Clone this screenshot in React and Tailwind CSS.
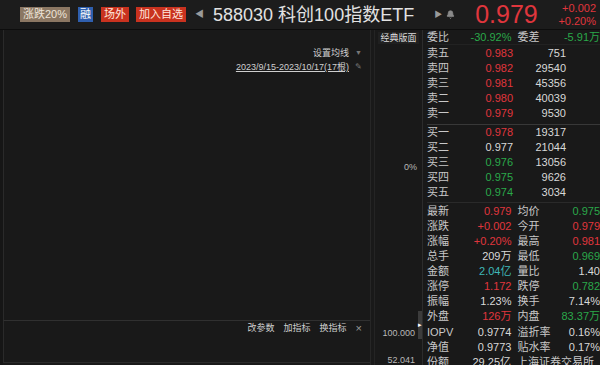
import { Bell } from "lucide-react";

const FONT = { fontFamily: '"Liberation Sans", "Noto Sans CJK SC", sans-serif' };

const RED = "text-[#e0363d]";
const GREEN = "text-[#2aa84a]";
const WHITE = "text-[#d8d8d8]";

const asks = [
  ["卖五", "0.983", "751"],
  ["卖四", "0.982", "29540"],
  ["卖三", "0.981", "45356"],
  ["卖二", "0.980", "40039"],
  ["卖一", "0.979", "9530"],
];

const bids = [
  ["买一", "0.978", "19317", RED],
  ["买二", "0.977", "21044", WHITE],
  ["买三", "0.976", "13056", GREEN],
  ["买四", "0.975", "9626", GREEN],
  ["买五", "0.974", "3034", GREEN],
];

const stats = [
  ["最新", "0.979", RED, "均价", "0.975", GREEN],
  ["涨跌", "+0.002", RED, "今开", "0.979", RED],
  ["涨幅", "+0.20%", RED, "最高", "0.981", RED],
  ["总手", "209万", WHITE, "最低", "0.969", GREEN],
  ["金额", "2.04亿", "text-[#3fb8b8]", "量比", "1.40", WHITE],
  ["涨停", "1.172", RED, "跌停", "0.782", GREEN],
  ["振幅", "1.23%", WHITE, "换手", "7.14%", WHITE],
  ["外盘", "126万", RED, "内盘", "83.37万", GREEN],
];

const fund = [
  ["IOPV", "0.9774", "溢折率", "0.16%"],
  ["净值", "0.9773", "贴水率", "0.17%"],
  ["份额", "29.25亿", "上海证券交易所", ""],
];

function BookRow({ label, price, vol, color }) {
  return (
    <div className="flex h-[15px] items-center">
      <span className="w-[30px] text-[#c8c8c8]">{label}</span>
      <span className={`w-[56px] text-right ${color}`}>{price}</span>
      <span className="w-[53px] text-right text-[#d8d8d8]">{vol}</span>
    </div>
  );
}

function StatRow({ l1, v1, c1, l2, v2, c2 }) {
  return (
    <div className="flex h-[15px] items-center whitespace-nowrap">
      <span className="w-[30px] text-[#c8c8c8]">{l1}</span>
      <span className={`w-[56px] text-right ${c1}`}>{v1}</span>
      <span className="ml-[6px] w-[40px] text-[#c8c8c8]">{l2}</span>
      <span className={`w-[44px] text-right ${c2}`}>{v2}</span>
    </div>
  );
}

export default function App() {
  return (
    <div className="w-[600px] h-[365px] overflow-hidden bg-[#191919] flex flex-col" style={FONT}>
      {/* top bar */}
      <div className="h-[30px] shrink-0 flex items-center bg-[#1c1c1c] border-b border-[#0d0d0d] whitespace-nowrap">
        <span className="ml-[20px] h-[15px] px-[3px] flex items-center text-[11px] bg-[#8b7763] text-[#eee4d8]">涨跌20%</span>
        <span className="ml-[8px] h-[15px] px-[2px] flex items-center text-[11px] bg-[#2f5fae] text-white">融</span>
        <span className="ml-[8px] h-[15px] px-[3px] flex items-center text-[11px] bg-[#c9321f] text-[#ffe6dc]">场外</span>
        <span className="ml-[7px] h-[15px] px-[3px] flex items-center text-[11px] bg-[#c9321f] text-[#ffe6dc]">加入自选</span>
        <span className="ml-[9px] text-[9px] text-[#9a9a9a]">◀</span>
        <span className="ml-[9px] text-[18px] text-[#e2e2e2] leading-none">588030 科创100指数ETF</span>
        <span className="ml-[20px] text-[8px] text-[#9a9a9a]">▶</span>
        <Bell className="ml-[4px] w-[9px] h-[9px] text-[#8a8a8a]" fill="#8a8a8a" />
        <span className="ml-[20px] text-[25px] leading-none text-[#e0363d]">0.979</span>
        <div className="ml-auto mr-[4px] flex flex-col items-end text-[11px] leading-[13px] text-[#e0363d]">
          <span>+0.002</span>
          <span>+0.20%</span>
        </div>
      </div>

      <div className="flex flex-1 min-h-0">
        {/* chart */}
        <div className="w-[370px] flex flex-col border-l-[3px] border-l-[#161616]">
          <div className="flex-1 border-l border-[#2a2a2a] flex flex-col items-end pr-[8px] pt-[16px] text-[9px] text-[#cfcfcf]">
            <div className="flex items-center gap-[6px] leading-[14px]">
              <span>设置均线</span>
              <span className="text-[7px] text-[#777]">▼</span>
            </div>
            <div className="flex items-center gap-[6px] leading-[14px]">
              <span className="underline">2023/9/15-2023/10/17(17根)</span>
              <span className="text-[8px] text-[#777]">✎</span>
            </div>
          </div>
          <div className="h-[42px] shrink-0 border-t border-[#303030] border-l border-l-[#2a2a2a] flex justify-end items-start pt-[1px] pr-[8px] gap-[9px] text-[9px] text-[#cfcfcf]">
            <span>改参数</span>
            <span>加指标</span>
            <span>换指标</span>
            <span className="text-[11px] leading-[12px] text-[#999]">×</span>
          </div>
          <div className="h-[3px] shrink-0 border-t border-[#2a2a2a]" />
        </div>

        {/* axis */}
        <div className="w-[52px] flex border-l border-[#262626]">
          <div className="w-[4px] border-r border-[#242424]" />
          <div className="flex-1 flex flex-col text-[9px] text-[#b8b8b8]">
            <span className="self-center mt-[2px] px-[2px] bg-[#202020] text-[#dcdcdc] leading-[12px]">经典版面</span>
            <span className="self-end mt-[117px] pr-[5px]">0%</span>
            <div className="flex-1" />
            <div className="flex items-end">
              <span className="flex-1 text-right pr-[3px] mb-[-3px]">100.000</span>
              <div className="w-[4px] h-[28px] bg-[#3c3c3c] mb-[-2px] flex items-center justify-center text-[7px] text-white">▸</div>
            </div>
            <span className="self-end pr-[7px] mt-[18px] leading-[10px]">52.041</span>
          </div>
        </div>

        {/* quote panel */}
        <div className="flex-1 border-l border-[#2c2c2c] pl-[4px] text-[11px] whitespace-nowrap overflow-hidden">
          <div className="flex h-[15px] items-center border-b border-[#222]">
            <span className="w-[30px] text-[#c8c8c8]">委比</span>
            <span className={`w-[56px] text-right ${GREEN}`}>-30.92%</span>
            <span className="ml-[6px] w-[40px] text-[#c8c8c8]">委差</span>
            <span className={`w-[44px] text-right ${GREEN}`}>-5.91万</span>
          </div>
          <div className="pt-[1px] pb-[3px]">
            {asks.map(([l, p, v]) => (
              <BookRow key={l} label={l} price={p} vol={v} color={RED} />
            ))}
          </div>
          <div className="border-t border-[#383838] pb-[2px]">
            {bids.map(([l, p, v, c]) => (
              <BookRow key={l} label={l} price={p} vol={v} color={c} />
            ))}
          </div>
          <div className="border-t border-[#2a2a2a] pt-[1px]">
            {stats.map(([l1, v1, c1, l2, v2, c2]) => (
              <StatRow key={l1} l1={l1} v1={v1} c1={c1} l2={l2} v2={v2} c2={c2} />
            ))}
          </div>
          <div className="pt-[1px]">
            {fund.map(([l1, v1, l2, v2]) => (
              <StatRow key={l1} l1={l1} v1={v1} c1={WHITE} l2={l2} v2={v2} c2={WHITE} />
            ))}
          </div>
        </div>
      </div>
    </div>
  );
}
